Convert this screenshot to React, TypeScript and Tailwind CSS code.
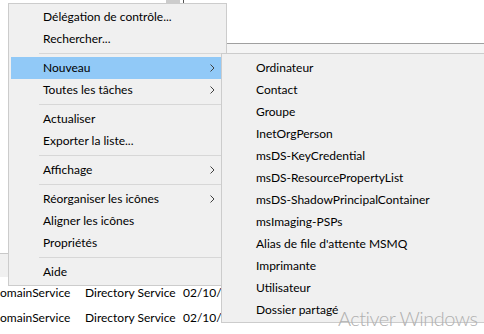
import React from "react";

type Entry = { label: string; sub?: boolean; active?: boolean } | "sep";

const mainItems: Entry[] = [
  { label: "Délégation de contrôle..." },
  { label: "Rechercher..." },
  "sep",
  { label: "Nouveau", sub: true, active: true },
  { label: "Toutes les tâches", sub: true },
  "sep",
  { label: "Actualiser" },
  { label: "Exporter la liste..." },
  "sep",
  { label: "Affichage", sub: true },
  "sep",
  { label: "Réorganiser les icônes", sub: true },
  { label: "Aligner les icônes" },
  { label: "Propriétés" },
  "sep",
  { label: "Aide" },
];

const newItems = [
  "Ordinateur",
  "Contact",
  "Groupe",
  "InetOrgPerson",
  "msDS-KeyCredential",
  "msDS-ResourcePropertyList",
  "msDS-ShadowPrincipalContainer",
  "msImaging-PSPs",
  "Alias de file d'attente MSMQ",
  "Imprimante",
  "Utilisateur",
  "Dossier partagé",
];

const font = { fontFamily: 'Lato, "Noto Sans", sans-serif' };

function Chevron() {
  return (
    <svg width="5" height="8" viewBox="0 0 5 8" className="shrink-0">
      <polyline points="0.5,0.5 4,4 0.5,7.5" fill="none" stroke="#404040" strokeWidth="1" />
    </svg>
  );
}

function MenuRow({ label, sub, active }: { label: string; sub?: boolean; active?: boolean }) {
  return (
    <div
      className={`flex h-[22px] items-center pl-[32px] pr-[7px] text-[12px] text-black ${
        active ? "bg-[#91c9f7]" : ""
      }`}
    >
      <span className="flex-1 whitespace-nowrap">{label}</span>
      {sub && <Chevron />}
    </div>
  );
}

function Separator() {
  return (
    <div className="flex h-[7px] items-center pl-[28px]">
      <div className="h-px flex-1 bg-[#d7d7d7]" />
    </div>
  );
}

export default function App() {
  return (
    <div className="relative h-[334px] w-[484px] overflow-hidden bg-white" style={font}>
      {/* background window */}
      <div className="flex flex-col">
        <div className="flex h-[43px] items-start">
          <div className="ml-[166px] h-[3px] w-[14px] bg-[#cccccc]" />
          <div className="ml-[3px] h-[4px] w-px bg-[#555555]" />
        </div>
        <div className="flex h-[10px]">
          <div className="w-[200px]" />
          <div className="flex-1 border-t border-[#a0a0a0] bg-[#f5f5f5]" />
        </div>
        <div className="h-[200px]" />
        <div className="h-[24px] border-t border-[#c8c8c8] bg-[#f0f0f0]" />
        <div className="flex flex-col pt-[3px] text-[12px] text-black">
          {[0, 1].map((i) => (
            <div key={i} className="flex h-[25px] items-center whitespace-nowrap">
              <span className="ml-[-9px] w-[94px] shrink-0">DomainService</span>
              <span className="w-[98px] shrink-0">Directory Service</span>
              <span className="shrink-0">02/10/2022</span>
            </div>
          ))}
        </div>
      </div>

      {/* context menu */}
      <div className="absolute left-[8px] top-[3px] w-[219px] border border-[#cccccc] bg-[#f0f0f0] pb-[2px] pl-[2px] pr-[4px] pt-[2px]">
        {mainItems.map((e, i) =>
          e === "sep" ? <Separator key={i} /> : <MenuRow key={i} {...e} />
        )}
      </div>

      {/* Nouveau submenu */}
      <div className="absolute left-[221px] top-[53px] w-[290px] border border-[#cccccc] bg-[#f0f0f0] pb-[1px] pl-[2px] pt-[3px]">
        {newItems.map((label) => (
          <MenuRow key={label} label={label} />
        ))}
      </div>

      {/* activation watermark */}
      <div className="absolute left-[338px] top-[303px] whitespace-nowrap text-[20px] font-light tracking-[-0.5px] text-[#b0b0b0]">
        Activer Windows
      </div>
    </div>
  );
}
